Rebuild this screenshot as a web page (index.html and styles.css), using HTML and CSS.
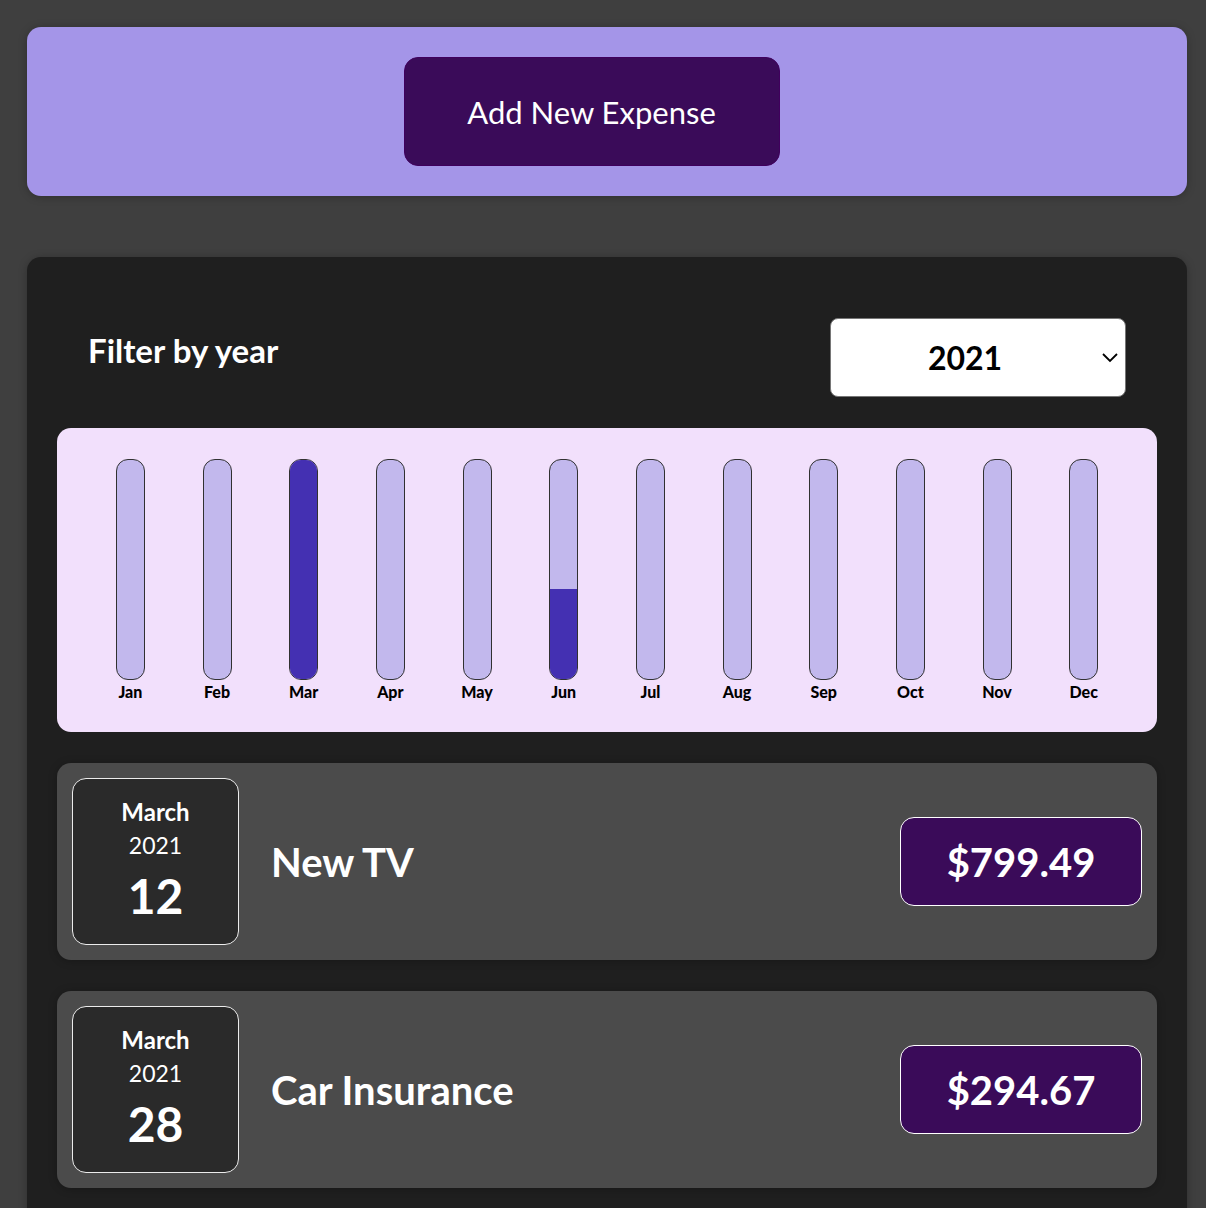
FILE: index.html
```html
<!DOCTYPE html>
<html lang="en">
<head>
  <meta charset="UTF-8" />
  <title>Expenses</title>
  <link rel="stylesheet" href="styles.css">
</head>
<body>
  <div class="new-expense">
    <button class="add-btn">Add New Expense</button>
  </div>

  <div class="expenses">
    <div class="filter">
      <label class="filter-label">Filter by year</label>
      <div class="select-wrap">
        <select class="year-select">
          <option>2022</option>
          <option selected>2021</option>
          <option>2020</option>
          <option>2019</option>
        </select>
        <svg class="chevron" width="18" height="12" viewBox="0 0 18 12">
          <path d="M2 3 L9 10 L16 3" fill="none" stroke="#000" stroke-width="1.8"/>
        </svg>
      </div>
    </div>

    <div class="chart">
      <div class="chart-bar">
        <div class="bar-inner"><div class="bar-fill" style="height: 0%"></div></div>
        <div class="bar-label">Jan</div>
      </div>
      <div class="chart-bar">
        <div class="bar-inner"><div class="bar-fill" style="height: 0%"></div></div>
        <div class="bar-label">Feb</div>
      </div>
      <div class="chart-bar">
        <div class="bar-inner"><div class="bar-fill" style="height: 100%"></div></div>
        <div class="bar-label">Mar</div>
      </div>
      <div class="chart-bar">
        <div class="bar-inner"><div class="bar-fill" style="height: 0%"></div></div>
        <div class="bar-label">Apr</div>
      </div>
      <div class="chart-bar">
        <div class="bar-inner"><div class="bar-fill" style="height: 0%"></div></div>
        <div class="bar-label">May</div>
      </div>
      <div class="chart-bar">
        <div class="bar-inner"><div class="bar-fill" style="height: 41%"></div></div>
        <div class="bar-label">Jun</div>
      </div>
      <div class="chart-bar">
        <div class="bar-inner"><div class="bar-fill" style="height: 0%"></div></div>
        <div class="bar-label">Jul</div>
      </div>
      <div class="chart-bar">
        <div class="bar-inner"><div class="bar-fill" style="height: 0%"></div></div>
        <div class="bar-label">Aug</div>
      </div>
      <div class="chart-bar">
        <div class="bar-inner"><div class="bar-fill" style="height: 0%"></div></div>
        <div class="bar-label">Sep</div>
      </div>
      <div class="chart-bar">
        <div class="bar-inner"><div class="bar-fill" style="height: 0%"></div></div>
        <div class="bar-label">Oct</div>
      </div>
      <div class="chart-bar">
        <div class="bar-inner"><div class="bar-fill" style="height: 0%"></div></div>
        <div class="bar-label">Nov</div>
      </div>
      <div class="chart-bar">
        <div class="bar-inner"><div class="bar-fill" style="height: 0%"></div></div>
        <div class="bar-label">Dec</div>
      </div>
    </div>

    <ul class="expenses-list">
      <li class="expense-item">
        <div class="expense-date">
          <div class="date-month">March</div>
          <div class="date-year">2021</div>
          <div class="date-day">12</div>
        </div>
        <div class="expense-description">
          <h2>New TV</h2>
          <div class="expense-price">$799.49</div>
        </div>
      </li>
      <li class="expense-item">
        <div class="expense-date">
          <div class="date-month">March</div>
          <div class="date-year">2021</div>
          <div class="date-day">28</div>
        </div>
        <div class="expense-description">
          <h2>Car Insurance</h2>
          <div class="expense-price">$294.67</div>
        </div>
      </li>
    </ul>
  </div>
</body>
</html>
```

FILE: styles.css
```css
* {
  box-sizing: border-box;
}

body {
  margin: 0;
  padding: 27px 19px 0 27px;
  background-color: #3f3f3f;
  font-family: 'Lato', 'Noto Sans', sans-serif;
  color: #fff;
}

.new-expense {
  background-color: #a495e8;
  padding: 30px 61px 30px 30px;
  border-radius: 14px;
  display: flex;
  justify-content: center;
  box-shadow: 0 1px 8px rgba(0, 0, 0, 0.25);
}

.add-btn {
  width: 376px;
  height: 109px;
  font-family: inherit;
  font-size: 31px;
  color: #fff;
  background-color: #3a0b59;
  border: 1px solid #40005d;
  border-radius: 14px;
  cursor: pointer;
}

.expenses {
  margin-top: 61px;
  background-color: #1f1f1f;
  padding: 61px 30px 30px;
  border-radius: 14px;
  box-shadow: 0 1px 8px rgba(0, 0, 0, 0.25);
}

.filter {
  display: flex;
  justify-content: space-between;
  align-items: center;
  padding: 0 31px;
  margin-bottom: 31px;
}

.filter-label {
  font-size: 33px;
  font-weight: 700;
  margin-top: -16px;
}

.select-wrap {
  position: relative;
}

.year-select {
  appearance: none;
  -webkit-appearance: none;
  width: 296px;
  height: 79px;
  padding: 0 26px 0 0;
  font-family: inherit;
  font-size: 32px;
  font-weight: 700;
  color: #000;
  text-align: center;
  text-align-last: center;
  background: #fff;
  border: 1px solid #767676;
  border-radius: 8px;
}

.chevron {
  position: absolute;
  right: 7px;
  top: 33px;
  pointer-events: none;
}

.chart {
  display: flex;
  padding: 31px 30px 28px;
  background-color: #f2e0fc;
  border-radius: 14px;
  height: 304px;
}

.chart-bar {
  flex: 1;
  display: flex;
  flex-direction: column;
  align-items: center;
}

.bar-inner {
  width: 29px;
  height: 221px;
  border: 1px solid #313131;
  border-radius: 12px;
  background-color: #c2b8ed;
  overflow: hidden;
  display: flex;
  flex-direction: column;
  justify-content: flex-end;
}

.bar-fill {
  background-color: #4430b2;
}

.bar-label {
  margin-top: 2px;
  font-size: 16px;
  font-weight: 900;
  color: #000;
}

.expenses-list {
  list-style: none;
  margin: 31px 0 0;
  padding: 0;
}

.expense-item {
  display: flex;
  align-items: center;
  gap: 32px;
  height: 197px;
  padding: 15px;
  margin-bottom: 31px;
  background-color: #4b4b4b;
  border-radius: 14px;
  box-shadow: 0 1px 8px rgba(0, 0, 0, 0.25);
}

.expense-date {
  width: 167px;
  height: 167px;
  display: flex;
  flex-direction: column;
  align-items: center;
  justify-content: center;
  padding-bottom: 6px;
  background-color: #2a2a2a;
  border: 1px solid #ececec;
  border-radius: 14px;
  color: #fff;
}

.date-month {
  font-size: 24px;
  font-weight: 700;
}

.date-year {
  font-size: 23px;
  margin-top: 5px;
}

.date-day {
  font-size: 48px;
  font-weight: 700;
  line-height: 1;
  margin-top: 13px;
}

.expense-description {
  flex: 1;
  display: flex;
  align-items: center;
  justify-content: space-between;
}

.expense-description h2 {
  margin: 0;
  font-size: 40px;
  font-weight: 700;
  color: #fff;
}

.expense-price {
  width: 242px;
  height: 89px;
  display: flex;
  align-items: center;
  justify-content: center;
  font-size: 40px;
  font-weight: 700;
  color: #fff;
  background-color: #3a0b59;
  border: 1px solid #fff;
  border-radius: 14px;
}
```
